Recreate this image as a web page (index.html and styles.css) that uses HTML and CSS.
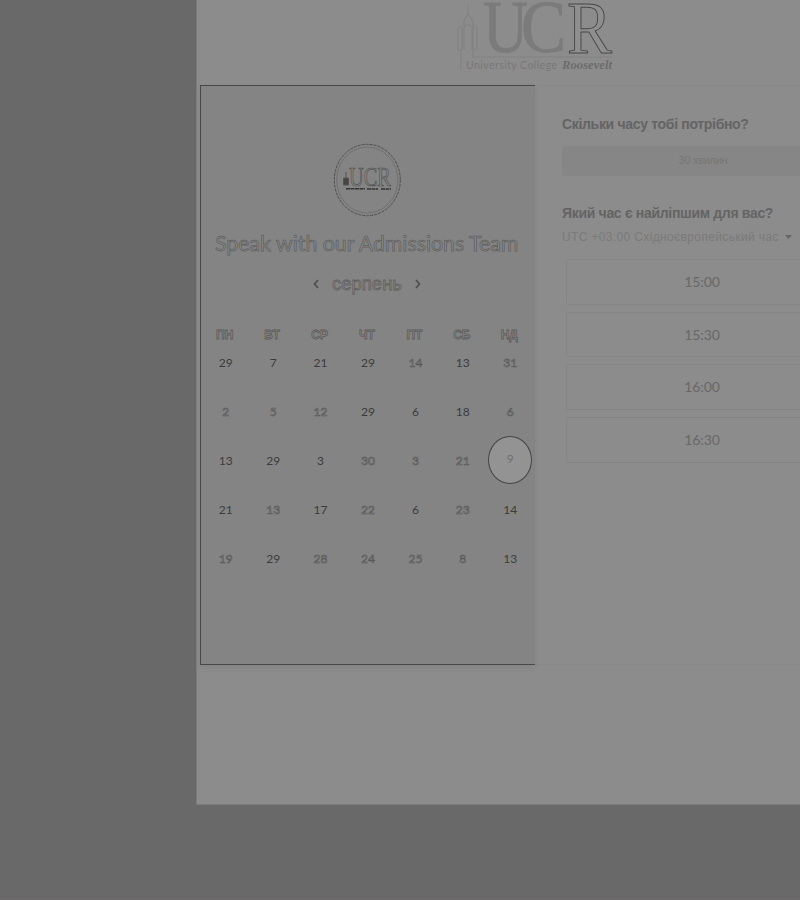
FILE: index.html
```
<!DOCTYPE html>
<html lang="uk">
<head>
<meta charset="utf-8">
<title>Speak with our Admissions Team</title>
<link rel="stylesheet" href="styles.css">
</head>
<body>
<main class="page">
  <header class="brand">
    <svg class="brand-logo" width="164" height="76" viewBox="456 0 164 76">
      <g class="tower"><path d="M461 70V50H458V29q2-5 4 0v21M468 5v9l-4 7v28M468 14l5 7v28M465 27q3-5 6 0M472 50V28q3-5 5 0v22h-4v7H612"/></g>
      <text class="logo-u" x="483" y="52" textLength="45" lengthAdjust="spacingAndGlyphs">U</text>
      <text class="logo-u" x="521" y="52" textLength="45" lengthAdjust="spacingAndGlyphs">C</text>
      <text class="logo-r" x="567" y="53" textLength="45" lengthAdjust="spacingAndGlyphs">R</text>
      <text class="logo-name" x="466" y="69" textLength="91">University College</text>
      <text class="logo-roos" x="562" y="69" textLength="50" lengthAdjust="spacingAndGlyphs">Roosevelt</text>
    </svg>
  </header>
  <div class="booking">
    <section class="calendar">
      <svg class="avatar" width="68" height="74" viewBox="333 143 68 74">
        <ellipse class="ring-dark" cx="367.3" cy="180" rx="33" ry="35.7"/>
        <ellipse class="ring" cx="367.3" cy="180" rx="30.6" ry="33"/>
        <path class="mini-tower" d="M343.500 178h5v7h-5zM346 172v6"/>
        <text class="mini-ucr" x="349" y="186" textLength="42" lengthAdjust="spacingAndGlyphs">UCR</text>
        <path class="mini-line" d="M346 188.700H365M367 189h11M381 189h10"/>
      </svg>
      <h1 class="title">Speak with our Admissions Team</h1>
      <div class="month">
        <svg width="6" height="10" viewBox="0 0 6 10"><path d="M5 1 1.500 5 5 9"/></svg>
        <span>серпень</span>
        <svg width="6" height="10" viewBox="0 0 6 10"><path d="M1 1 4.500 5 1 9"/></svg>
      </div>
      <div class="week head"><span>ПН</span><span>ВТ</span><span>СР</span><span>ЧТ</span><span>ПТ</span><span>СБ</span><span>НД</span></div>
      <div class="week"><b>29</b><b>7</b><b>21</b><b>29</b><i>14</i><b>13</b><i>31</i></div>
      <div class="week"><i>2</i><i>5</i><i>12</i><b>29</b><b>6</b><b>18</b><i>6</i></div>
      <div class="week"><b>13</b><b>29</b><b>3</b><i>30</i><i>3</i><i>21</i><span class="selected">9</span></div>
      <div class="week"><b>21</b><i>13</i><b>17</b><i>22</i><b>6</b><i>23</i><b>14</b></div>
      <div class="week"><i>19</i><b>29</b><i>28</i><i>24</i><i>25</i><i>8</i><b>13</b></div>
    </section>
    <section class="times">
      <h2>Скільки часу тобі потрібно?</h2>
      <div class="duration">30 хвилин</div>
      <h2>Який час є найліпшим для вас?</h2>
      <div class="zone"><span>UTC +03:00 Східноєвропейський час</span><svg width="7" height="4" viewBox="0 0 7 4"><path d="M0 0h7L3.500 4z"/></svg></div>
      <div class="slots"><div class="slot">15:00</div><div class="slot">15:30</div><div class="slot">16:00</div><div class="slot">16:30</div></div>
    </section>
  </div>
</main>
</body>
</html>
```
FILE: styles.css
```
* { box-sizing: border-box; }
body { margin: 0; height: 900px; overflow: hidden; background: #696969; border-bottom: 1px solid #716a6c; font-family: "Liberation Sans", sans-serif; }
.page { margin-left: 196px; height: 805px; overflow: hidden; background: #8c8c8c; border: solid #7b7b7b; border-width: 0 0 1px 1px; }
.brand { height: 85px; padding-left: 259px; }
svg { display: block; }
.tower { fill: none; stroke: #828282; stroke-width: 1.2; }
.brand text { font-family: "Liberation Serif", serif; }
.brand .logo-u { font-size: 74px; fill: #7b7b7b; stroke: #7b7b7b; stroke-width: .8; }
.brand .logo-r { font-size: 75px; fill: #8f8f8f; stroke: #464646; stroke-width: 1; }
.brand .logo-name { font: 10.500px Lato, sans-serif; fill: #777; }
.brand .logo-roos { font-size: 13px; font-weight: bold; font-style: italic; fill: #6c6c6c; }
.booking { display: flex; margin-left: 3px; height: 580px; border-bottom: 1px solid #888; }
.calendar { width: 335px; height: 580px; flex: none; padding: 57px 0 0 1px; background: #848484; border: solid #484848; border-width: 1px 0 1px 1px; box-shadow: 0 3px 7px rgba(0,0,0,.06); }
.avatar { margin-left: 131px; }
.ring, .ring-dark { fill: none; stroke: #707070; stroke-width: 1; }
.ring-dark { stroke: #4d4d4d; stroke-dasharray: 3 1; }
.mini-tower { fill: #444; stroke: #555; }
.mini-ucr { font: 27px "Liberation Serif", serif; fill: #858585; stroke: #505050; stroke-width: .7; }
.mini-line { stroke: #333; stroke-width: 1.5; stroke-dasharray: 4 .5; }
.title { margin: 13px 0 0 13px; font: 21.300px/26px Lato, sans-serif; color: #898989; -webkit-text-stroke: .75px #606060; white-space: nowrap; }
.month { display: flex; align-items: center; justify-content: center; gap: 13px; width: 330px; height: 28px; margin-top: 14px; font-size: 18.500px; color: #898989; -webkit-text-stroke: .8px #606060; }
.month svg { fill: none; stroke: #4e4e4e; stroke-width: 1.7; }
.week { display: grid; grid-template-columns: repeat(7, 47.430px); height: 49px; align-items: center; justify-items: center; font: 12px Lato, sans-serif; }
.week b { color: #3c3c3c; font-weight: normal; }
.week i { font-style: normal; color: #868686; -webkit-text-stroke: .6px #575757; }
.week.head { height: 14px; margin: 30px 0 -4px -1px; font: bold 12px "Liberation Sans", sans-serif; color: #898989; -webkit-text-stroke: .8px #5c5c5c; }
.selected { display: flex; align-items: center; justify-content: center; width: 44px; height: 48px; margin-top: -2px; padding-bottom: 2px; border: 1px solid #444; border-radius: 50%; background: #939393; color: #707070; }
.times { flex: none; width: 340px; padding: 28px 0 0 27px; border-top: 1px solid #888; }
h2 { margin: 0; font-size: 14px; line-height: 20px; letter-spacing: -.32px; color: #646464; white-space: nowrap; }
.duration { width: 282px; height: 30px; margin: 12px 0 27px; border-radius: 3px; background: #868686; color: #767676; font-size: 11px; line-height: 29px; text-align: center; letter-spacing: -.3px; }
.zone { display: flex; align-items: center; gap: 6px; height: 20px; margin-top: 4px; color: #7a7a7a; font-size: 12px; letter-spacing: .36px; white-space: nowrap; }
.zone svg { fill: #666; }
.slots { display: grid; gap: 7px; margin: 12px 0 0 4px; width: 272px; }
.slot { height: 45.700px; border: 1px solid #858585; border-radius: 2px; text-align: center; font: 14px/43px Lato, sans-serif; letter-spacing: -.1px; color: #686868; }
```
